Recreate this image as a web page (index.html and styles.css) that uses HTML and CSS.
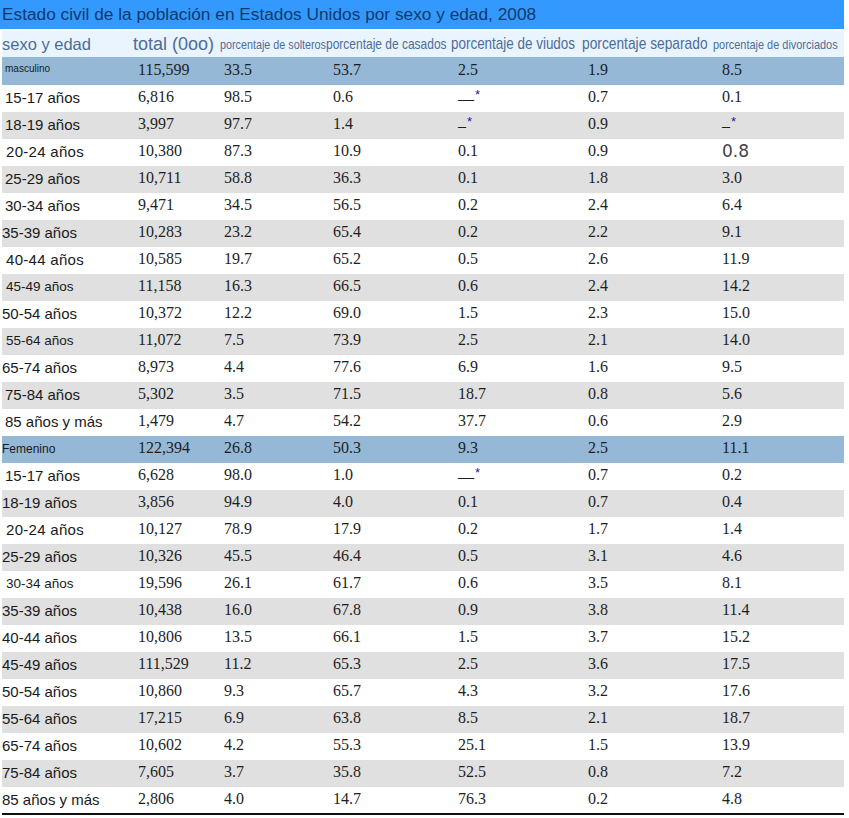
FILE: index.html
```html
<!DOCTYPE html>
<html lang="es">
<head>
<meta charset="utf-8">
<title>Estado civil de la población en Estados Unidos por sexo y edad, 2008</title>
<link rel="stylesheet" href="styles.css">
</head>
<body>
<div class="sheet">
  <div class="title">Estado civil de la población en Estados Unidos por sexo y edad, 2008</div>
  <table class="data">
    <colgroup>
      <col class="c1"><col class="c2"><col class="c3"><col class="c4"><col class="c5"><col class="c6"><col class="c7">
    </colgroup>
    <thead>
      <tr class="head">
        <th class="h-big">sexo y edad</th>
        <th class="h-total">total (0oo)</th>
        <th><span class="narrow n-sol">porcentaje de solteros</span></th>
        <th><span class="narrow n-cas">porcentaje de casados</span></th>
        <th><span class="narrow n-viu">porcentaje de viudos</span></th>
        <th><span class="narrow n-sep">porcentaje separado</span></th>
        <th><span class="narrow n-div">porcentaje de divorciados</span></th>
      </tr>
    </thead>
    <tbody>
      <tr class="section first"><td class="lab tiny">masculino</td><td>115,599</td><td>33.5</td><td>53.7</td><td>2.5</td><td>1.9</td><td>8.5</td></tr>
      <tr><td class="lab">15-17 años</td><td>6,816</td><td>98.5</td><td>0.6</td><td>—<span class="ast">*</span></td><td>0.7</td><td>0.1</td></tr>
      <tr class="alt"><td class="lab">18-19 años</td><td>3,997</td><td>97.7</td><td>1.4</td><td>–<span class="ast">*</span></td><td>0.9</td><td>–<span class="ast">*</span></td></tr>
      <tr><td class="lab wide">20-24 años</td><td>10,380</td><td>87.3</td><td>10.9</td><td>0.1</td><td>0.9</td><td class="odd">0.8</td></tr>
      <tr class="alt"><td class="lab">25-29 años</td><td>10,711</td><td>58.8</td><td>36.3</td><td>0.1</td><td>1.8</td><td>3.0</td></tr>
      <tr><td class="lab">30-34 años</td><td>9,471</td><td>34.5</td><td>56.5</td><td>0.2</td><td>2.4</td><td>6.4</td></tr>
      <tr class="alt"><td class="lab flush">35-39 años</td><td>10,283</td><td>23.2</td><td>65.4</td><td>0.2</td><td>2.2</td><td>9.1</td></tr>
      <tr><td class="lab wide">40-44 años</td><td>10,585</td><td>19.7</td><td>65.2</td><td>0.5</td><td>2.6</td><td>11.9</td></tr>
      <tr class="alt"><td class="lab small">45-49 años</td><td>11,158</td><td>16.3</td><td>66.5</td><td>0.6</td><td>2.4</td><td>14.2</td></tr>
      <tr><td class="lab flush">50-54 años</td><td>10,372</td><td>12.2</td><td>69.0</td><td>1.5</td><td>2.3</td><td>15.0</td></tr>
      <tr class="alt"><td class="lab small">55-64 años</td><td>11,072</td><td>7.5</td><td>73.9</td><td>2.5</td><td>2.1</td><td>14.0</td></tr>
      <tr><td class="lab flush">65-74 años</td><td>8,973</td><td>4.4</td><td>77.6</td><td>6.9</td><td>1.6</td><td>9.5</td></tr>
      <tr class="alt"><td class="lab">75-84 años</td><td>5,302</td><td>3.5</td><td>71.5</td><td>18.7</td><td>0.8</td><td>5.6</td></tr>
      <tr><td class="lab">85 años y más</td><td>1,479</td><td>4.7</td><td>54.2</td><td>37.7</td><td>0.6</td><td>2.9</td></tr>
      <tr class="section"><td class="lab fem">Femenino</td><td>122,394</td><td>26.8</td><td>50.3</td><td>9.3</td><td>2.5</td><td>11.1</td></tr>
      <tr><td class="lab">15-17 años</td><td>6,628</td><td>98.0</td><td>1.0</td><td>—<span class="ast">*</span></td><td>0.7</td><td>0.2</td></tr>
      <tr class="alt"><td class="lab flush">18-19 años</td><td>3,856</td><td>94.9</td><td>4.0</td><td>0.1</td><td>0.7</td><td>0.4</td></tr>
      <tr><td class="lab wide">20-24 años</td><td>10,127</td><td>78.9</td><td>17.9</td><td>0.2</td><td>1.7</td><td>1.4</td></tr>
      <tr class="alt"><td class="lab flush">25-29 años</td><td>10,326</td><td>45.5</td><td>46.4</td><td>0.5</td><td>3.1</td><td>4.6</td></tr>
      <tr><td class="lab small">30-34 años</td><td>19,596</td><td>26.1</td><td>61.7</td><td>0.6</td><td>3.5</td><td>8.1</td></tr>
      <tr class="alt"><td class="lab flush">35-39 años</td><td>10,438</td><td>16.0</td><td>67.8</td><td>0.9</td><td>3.8</td><td>11.4</td></tr>
      <tr><td class="lab flush">40-44 años</td><td>10,806</td><td>13.5</td><td>66.1</td><td>1.5</td><td>3.7</td><td>15.2</td></tr>
      <tr class="alt"><td class="lab flush">45-49 años</td><td>111,529</td><td>11.2</td><td>65.3</td><td>2.5</td><td>3.6</td><td>17.5</td></tr>
      <tr><td class="lab flush">50-54 años</td><td>10,860</td><td>9.3</td><td>65.7</td><td>4.3</td><td>3.2</td><td>17.6</td></tr>
      <tr class="alt"><td class="lab flush">55-64 años</td><td>17,215</td><td>6.9</td><td>63.8</td><td>8.5</td><td>2.1</td><td>18.7</td></tr>
      <tr><td class="lab flush">65-74 años</td><td>10,602</td><td>4.2</td><td>55.3</td><td>25.1</td><td>1.5</td><td>13.9</td></tr>
      <tr class="alt"><td class="lab flush">75-84 años</td><td>7,605</td><td>3.7</td><td>35.8</td><td>52.5</td><td>0.8</td><td>7.2</td></tr>
      <tr class="last"><td class="lab flush">85 años y más</td><td>2,806</td><td>4.0</td><td>14.7</td><td>76.3</td><td>0.2</td><td>4.8</td></tr>
    </tbody>
  </table>
</div>
</body>
</html>
```

FILE: styles.css
```css
html, body {
  margin: 0;
  padding: 0;
  background: #ffffff;
}

.sheet {
  width: 844px;
}

.title {
  height: 29px;
  background: #3399ff;
  color: #0f3a6c;
  font-family: "Liberation Sans", Arial, sans-serif;
  font-size: 17.3px;
  line-height: 29px;
  padding-left: 2px;
  white-space: nowrap;
}

.data {
  margin: 2px 0 0 2px;
  width: 842px;
  table-layout: fixed;
  border-collapse: collapse;
  border-spacing: 0;
}

.c1 { width: 131px; }
.c2 { width: 87px; }
.c3 { width: 106px; }
.c4 { width: 125px; }
.c5 { width: 131px; }
.c6 { width: 131px; }
.c7 { width: 131px; }

.head {
  background: #eaf4ff;
  height: 26px;
}

.head th {
  padding: 0;
  text-align: left;
  font-weight: normal;
  font-family: "Liberation Sans", Arial, sans-serif;
  color: #4c6d99;
  white-space: nowrap;
  vertical-align: middle;
  overflow: hidden;
}

.h-big {
  font-size: 16.5px;
}

.h-total {
  font-size: 18px;
}

.narrow {
  display: inline-block;
  transform: scaleX(0.81);
  transform-origin: left center;
  white-space: nowrap;
}

.n-sol { font-size: 13.3px; }
.n-cas { font-size: 14.8px; }
.n-viu { font-size: 16.6px; }
.n-sep { font-size: 17px; }
.n-div { font-size: 13.5px; }

tbody tr {
  height: 27px;
}

tbody tr.first {
  height: 28px;
}

tbody tr.section {
  background: #95b8d6;
}

tbody tr.alt {
  background: #e0e0e0;
}

tbody tr.last td {
  border-bottom: 2px solid #111111;
}

tbody td {
  padding: 0 0 3px 0;
  font-family: "Liberation Serif", "Times New Roman", serif;
  font-size: 16px;
  color: #1e1e1e;
  white-space: nowrap;
  vertical-align: middle;
}

tbody td:nth-child(2) { padding-left: 5px; }
tbody td:nth-child(3) { padding-left: 4px; }
tbody td:nth-child(4) { padding-left: 7px; }
tbody td:nth-child(5) { padding-left: 7px; }
tbody td:nth-child(6) { padding-left: 6px; }
tbody td:nth-child(7) { padding-left: 9px; }

tbody td.lab {
  font-family: "Liberation Sans", Arial, sans-serif;
  font-size: 15px;
  color: #1a1a1a;
  padding-left: 3px;
  padding-bottom: 2px;
}

tbody td.lab.flush { padding-left: 0; }
tbody td.lab.wide { padding-left: 4px; letter-spacing: 0.3px; }
tbody td.lab.small { font-size: 13.5px; padding-left: 4px; }
tbody td.lab.tiny { font-size: 10px; padding-left: 3px; padding-bottom: 6px; }
tbody td.lab.fem { font-size: 12px; padding-left: 0; padding-bottom: 1px; }

.ast {
  color: #1c1c9c;
  font-family: "Liberation Sans", Arial, sans-serif;
  font-size: 13px;
  vertical-align: 5px;
  margin-left: 1px;
}

td.odd {
  font-family: "DejaVu Sans", sans-serif;
  font-size: 17px;
  color: #444444;
}
```
